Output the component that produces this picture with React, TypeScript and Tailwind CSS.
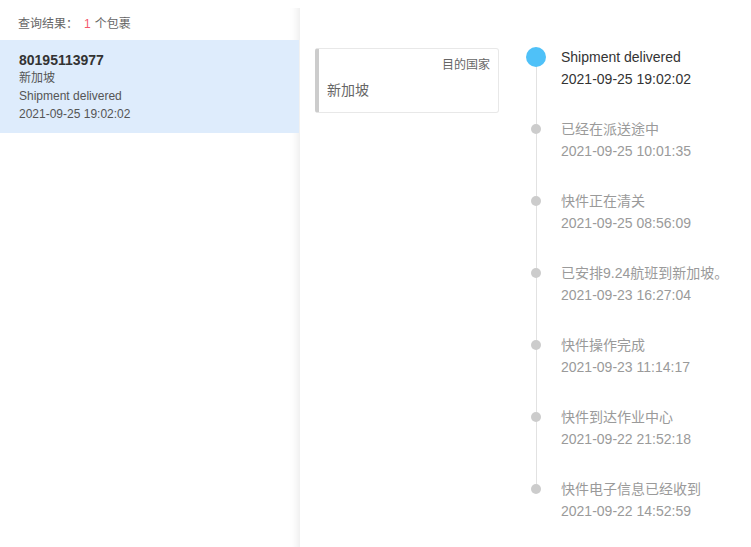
import React from 'react';

interface TrackEvent {
  title: string;
  time: string;
}

const events: TrackEvent[] = [
  { title: 'Shipment delivered', time: '2021-09-25 19:02:02' },
  { title: '已经在派送途中', time: '2021-09-25 10:01:35' },
  { title: '快件正在清关', time: '2021-09-25 08:56:09' },
  { title: '已安排9.24航班到新加坡。', time: '2021-09-23 16:27:04' },
  { title: '快件操作完成', time: '2021-09-23 11:14:17' },
  { title: '快件到达作业中心', time: '2021-09-22 21:52:18' },
  { title: '快件电子信息已经收到', time: '2021-09-22 14:52:59' },
];

const font = { fontFamily: '"Liberation Sans", "Noto Sans CJK SC", sans-serif' };

const TimelineItem: React.FC<{ event: TrackEvent; first: boolean; last: boolean }> = ({ event, first, last }) => (
  <div className={`relative flex ${last ? '' : 'pb-[28px]'}`}>
    {!last && (
      <div
        className={`absolute left-[10px] w-px bg-[#e2e2e2] h-[72px] ${first ? 'top-[11px]' : 'top-[11px]'}`}
      />
    )}
    <div className="relative w-[20px] shrink-0 flex justify-center">
      {first ? (
        <div className="mt-[1px] w-[20px] h-[20px] rounded-full bg-[#4fc1f8]" />
      ) : (
        <div className="mt-[6px] w-[10px] h-[10px] rounded-full bg-[#cccccc]" />
      )}
    </div>
    <div className={`ml-[15px] text-[14px] leading-[22px] ${first ? 'text-[#333333]' : 'text-[#9a9a9a]'}`}>
      <div>{event.title}</div>
      <div>{event.time}</div>
    </div>
  </div>
);

export default function App() {
  return (
    <div className="flex h-[547px] w-[751px] bg-white overflow-hidden" style={font}>
      <aside className="mt-2 w-[300px] shrink-0 bg-white shadow-[inset_-12px_0_10px_-10px_rgba(0,0,0,0.09)]">
        <div className="h-[32px] px-[18px] flex items-center text-[12px] text-[#666666]">
          <span>查询结果：</span>
          <span className="ml-[6px] text-[#f5576c]">1</span>
          <span className="ml-[4px]">个包裹</span>
        </div>
        <div className="w-[299px] bg-[#deecfc] pl-[19px] pt-[11px] pb-[10px] text-[12px] leading-[18px] text-[#555555]">
          <div className="text-[14px] font-bold text-[#333333]">80195113977</div>
          <div>新加坡</div>
          <div>Shipment delivered</div>
          <div>2021-09-25 19:02:02</div>
        </div>
      </aside>
      <main className="flex pl-[15px] pt-[46px]">
        <div className="mt-[2px] self-start w-[184px] rounded-[3px] border border-[#e8e8e8] border-l-4 border-l-[#cccccc] pt-[8px] pb-[12px] pl-[8px] pr-[8px] text-[#666666]">
          <div className="text-right text-[12px] leading-[16px]">目的国家</div>
          <div className="mt-[7px] text-[14px] leading-[20px]">新加坡</div>
        </div>
        <div className="ml-[27px]">
          {events.map((e, i) => (
            <TimelineItem key={i} event={e} first={i === 0} last={i === events.length - 1} />
          ))}
        </div>
      </main>
    </div>
  );
}
